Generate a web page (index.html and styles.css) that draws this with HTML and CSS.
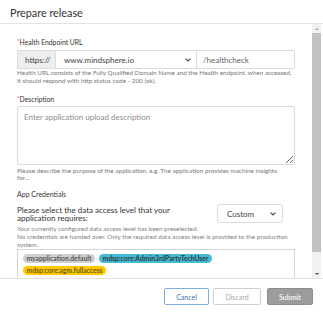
FILE: index.html
```html
<!DOCTYPE html>
<html lang="en">
<head>
  <meta charset="UTF-8">
  <title>Prepare release</title>
  <link rel="stylesheet" href="styles.css">
</head>
<body>

  <div class="dialog">
    <div class="dialog-header">
      <h2>Prepare release</h2>
    </div>

    <div class="dialog-body">
      <div class="scroll-content">

        <label class="field-label"><span class="req">*</span>Health Endpoint URL</label>
        <div class="input-group">
          <span class="addon">https://</span>
          <div class="select-box domain">
            <span>www.mindsphere.io</span>
            <svg width="6" height="4" viewBox="0 0 6 4"><path d="M0.6 0.6 L3 3 L5.4 0.6" fill="none" stroke="#444" stroke-width="1.1"/></svg>
          </div>
          <input class="path-input" type="text" value="/healthcheck">
        </div>
        <p class="help">Health URL consists of the Fully Qualified Domain Name and the Health endpoint. when accessed, it should respond with http status code - 200 (ok).</p>

        <label class="field-label spaced"><span class="req">*</span>Description</label>
        <textarea class="desc" placeholder="Enter application upload description"></textarea>
        <p class="help tight">Please describe the purpose of the application, e.g. The application provides machine insights<br>for...</p>

        <div class="section-title">App Credentials</div>

        <div class="access-row">
          <div class="access-text">Please select the data access level that your application requires:</div>
          <div class="select-box level">
            <span>Custom</span>
            <svg width="6" height="4" viewBox="0 0 6 4"><path d="M0.6 0.6 L3 3 L5.4 0.6" fill="none" stroke="#444" stroke-width="1.1"/></svg>
          </div>
        </div>
        <p class="help note">Your currently configured data access level has been preselected.<br>No credentials are handed over. Only the required data access level is provided to the production system.</p>

        <div class="chip-box">
          <span class="chip gray">myapplication.default</span>
          <span class="chip cyan">mdsp:core:Admin3rdPartyTechUser</span>
          <span class="chip yellow">mdsp:core:agm.fullaccess</span>
        </div>

      </div>

      <div class="scrollbar">
        <span class="arrow up"></span>
        <div class="thumb"></div>
        <div class="track"></div>
        <span class="arrow down"></span>
      </div>
    </div>

    <div class="dialog-footer">
      <button class="btn cancel-btn">Cancel</button>
      <button class="btn discard-btn">Discard</button>
      <button class="btn submit-btn">Submit</button>
    </div>
  </div>

</body>
</html>
```
FILE: styles.css
```css
* {
  box-sizing: border-box;
}

body {
  margin: 0;
  font-family: 'Lato', sans-serif;
  color: #333;
  background: white;
}

.dialog {
  width: 323px;
  height: 314px;
  display: flex;
  flex-direction: column;
  overflow: hidden;
}

.dialog-header {
  height: 24px;
  border-bottom: 1px solid #e3e3e3;
  padding: 6px 0 0 10px;
}
h2 {
  margin: 0;
  font-size: 10.8px;
  line-height: 13px;
  font-weight: normal;
  color: #333;
}

.dialog-body {
  height: 255px;
  display: flex;
  border-bottom: 1px solid #e3e3e3;
}
.scroll-content {
  flex: 1;
  overflow: hidden;
  padding: 12px 17px 0 17px;
}

.field-label {
  display: block;
  font-size: 6.8px;
  line-height: 10px;
  color: #333;
}
.field-label.spaced {
  margin-top: 8px;
}
.req {
  color: #e0201b;
  font-size: 6px;
  vertical-align: 2px;
}

.input-group {
  display: flex;
  height: 19px;
  margin-top: 3px;
  font-size: 8px;
}
.addon {
  width: 38px;
  display: flex;
  align-items: center;
  padding-left: 7px;
  background: #eceef0;
  border: 1px solid #dcdcdc;
  border-right: none;
  border-radius: 2px 0 0 2px;
  color: #444;
}
.select-box {
  display: flex;
  align-items: center;
  justify-content: space-between;
  border: 1px solid #dcdcdc;
  background: white;
  color: #444;
}
.domain {
  width: 142px;
  padding: 0 5px 0 8px;
}
.path-input {
  flex: 1;
  min-width: 0;
  border: 1px solid #dcdcdc;
  border-left: none;
  border-radius: 0 2px 2px 0;
  font-family: inherit;
  font-size: 8px;
  color: #666;
  padding: 0 6px;
  outline: none;
}

.help {
  margin: 0;
  font-size: 6.4px;
  line-height: 8px;
  color: #777;
}
.help.tight {
  margin-top: 2px;
  line-height: 7px;
}

.desc {
  display: block;
  width: 100%;
  height: 59px;
  margin-top: 2px;
  border: 1px solid #dcdcdc;
  border-radius: 2px;
  padding: 5px 6px;
  font-family: inherit;
  font-size: 8px;
  color: #444;
  resize: vertical;
  outline: none;
}
.desc::placeholder {
  color: #8c8c8c;
}

.section-title {
  margin-top: 8px;
  font-size: 7px;
  line-height: 10px;
  color: #333;
}

.access-row {
  display: flex;
  justify-content: space-between;
  margin-top: 5px;
}
.access-text {
  width: 160px;
  padding-top: 3px;
  font-size: 8px;
  line-height: 7.5px;
  color: #333;
}
.level {
  width: 66px;
  height: 19px;
  margin-right: 12px;
  padding: 0 6px 0 9px;
  border-radius: 3px;
  font-size: 8px;
}

.help.note {
  margin-top: 2px;
  color: #808080;
}

.chip-box {
  height: 60px;
  border: 1px solid #d4d4d4;
  padding: 4px 5px;
  display: flex;
  flex-wrap: wrap;
  align-content: flex-start;
  gap: 3px 4px;
}
.chip {
  height: 9px;
  line-height: 9px;
  padding: 0 3.5px;
  border-radius: 5px;
  font-size: 6.75px;
  font-weight: bold;
}
.chip.gray {
  background: #d0d0d0;
  color: #555;
}
.chip.cyan {
  background: #45bad5;
  color: #2d3a40;
}
.chip.yellow {
  background: #ffc800;
  color: #6b5d1a;
}

.scrollbar {
  width: 9px;
  margin-right: 2px;
  display: flex;
  flex-direction: column;
  background: #f1f1f1;
}
.arrow {
  height: 9px;
  display: flex;
  justify-content: center;
  align-items: center;
}
.arrow::before {
  content: "";
  border-left: 2px solid transparent;
  border-right: 2px solid transparent;
}
.arrow.up::before {
  border-bottom: 2px solid #a3a3a3;
}
.arrow.down::before {
  border-top: 2px solid #505050;
}
.thumb {
  height: 219px;
  background: #c1c1c1;
}
.track {
  flex: 1;
}

.dialog-footer {
  flex: 1;
  display: flex;
  justify-content: flex-end;
  align-items: flex-start;
  padding: 9px 10px 0 0;
}
.btn {
  height: 17px;
  font-family: inherit;
  font-size: 7px;
  border-radius: 2px;
  cursor: pointer;
  background: white;
}
.cancel-btn {
  width: 45px;
  border: 1px solid #7eaee0;
  color: #3a74b8;
}
.discard-btn {
  width: 48px;
  margin-left: 4px;
  border: 1px solid #d0d0d0;
  color: #a8a8a8;
}
.submit-btn {
  width: 46px;
  margin-left: 6px;
  border: 1px solid #8e8e8e;
  background: #9c9c9c;
  color: #f0f0f0;
  font-weight: bold;
}
```
